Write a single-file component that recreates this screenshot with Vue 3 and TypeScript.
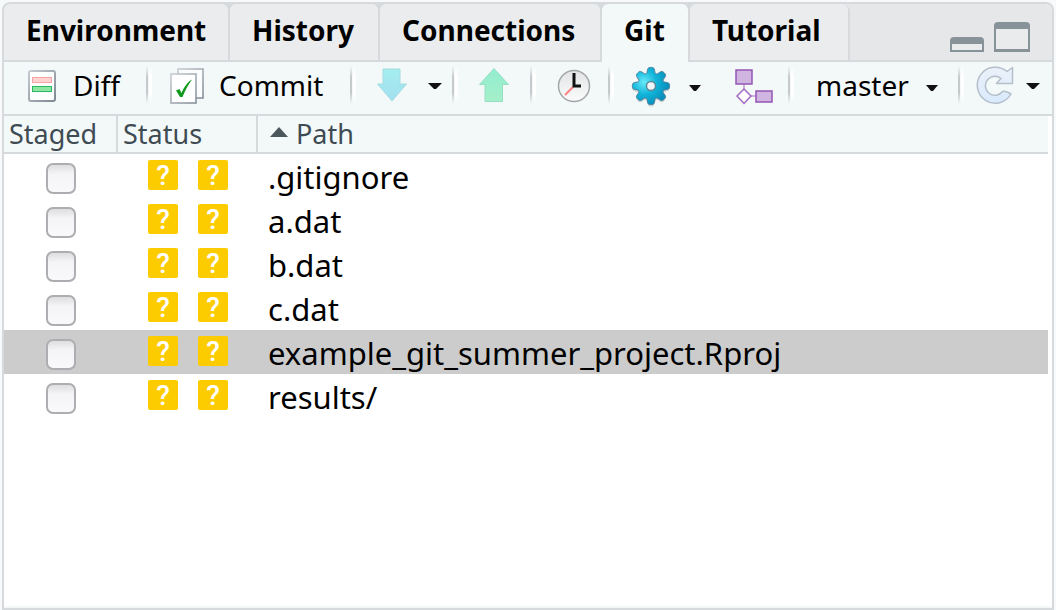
<script setup lang="ts">
import { reactive, ref } from 'vue'

interface FileEntry {
  path: string
  staged: boolean
}

const tabs = ['Environment', 'History', 'Connections', 'Git', 'Tutorial']
const activeTab = ref('Git')
const selected = ref('example_git_summer_project.Rproj')
const files = reactive<FileEntry[]>([
  { path: '.gitignore', staged: false },
  { path: 'a.dat', staged: false },
  { path: 'b.dat', staged: false },
  { path: 'c.dat', staged: false },
  { path: 'example_git_summer_project.Rproj', staged: false },
  { path: 'results/', staged: false },
])

// Outline of an eight-toothed wheel, with rounded tips and valleys.
function gearOutline(cx: number, cy: number): string {
  const points: string[] = []
  const steps = 160
  for (let i = 0; i < steps; i++) {
    const angle = (i / steps) * Math.PI * 2
    const radius = 15.7 + 3 * Math.tanh(1.7 * (Math.cos(8 * angle) + 0.3))
    points.push(`${(cx + radius * Math.sin(angle)).toFixed(2)} ${(cy - radius * Math.cos(angle)).toFixed(2)}`)
  }
  return `M${points.join('L')}Z`
}
const gear = gearOutline(20, 22)
</script>

<template>
  <main class="pane">
    <header class="tabbar">
      <div class="tabs" role="tablist">
        <button
          v-for="tab in tabs"
          :key="tab"
          type="button"
          role="tab"
          class="tab"
          :class="{ active: tab === activeTab }"
          :aria-selected="tab === activeTab"
          @click="activeTab = tab"
        >{{ tab }}</button>
      </div>
      <div class="window-controls">
        <button type="button" aria-label="Minimize">
          <svg width="34" height="15" viewBox="0 0 34 15">
            <path d="M0 15V4Q0 0 4 0H30Q34 0 34 4V15Z" fill="#879398" />
            <rect x="2" y="7" width="30" height="6" fill="#e9ebec" />
          </svg>
        </button>
        <button type="button" aria-label="Maximize">
          <svg width="36" height="30" viewBox="0 0 36 30">
            <path d="M0 30V4Q0 0 4 0H32Q36 0 36 4V30Z" fill="#879398" />
            <rect x="2" y="7" width="32" height="20" fill="#e9ebec" />
          </svg>
        </button>
      </div>
    </header>

    <div class="toolbar" role="toolbar" aria-label="Git">
      <div class="group diff">
        <button type="button" class="tool">
          <svg width="28" height="32" viewBox="0 0 28 32">
            <defs>
              <linearGradient id="page-edge" x1="0" y1="0" x2="1" y2="1">
                <stop offset="0" stop-color="#c3c9cf" />
                <stop offset="1" stop-color="#7f8993" />
              </linearGradient>
            </defs>
            <rect x="1" y="1" width="26" height="30" rx="2" fill="#fdfefe" stroke="url(#page-edge)" stroke-width="2" />
            <rect x="4.500" y="7.500" width="19" height="5" fill="#ffd3d3" stroke="#f5a3a5" />
            <rect x="4.500" y="16.500" width="19" height="5" fill="#8ee6a4" stroke="#27b95c" />
          </svg>
          <span>Diff</span>
        </button>
      </div>
      <div class="group commit">
        <button type="button" class="tool">
          <svg width="34" height="37" viewBox="0 0 34 37">
            <rect x="8" y="1" width="25" height="29" fill="#fbfcfd" stroke="url(#page-edge)" stroke-width="1.5" />
            <rect x="1" y="6" width="25" height="29" fill="#fff" stroke="url(#page-edge)" stroke-width="1.5" />
            <path d="M6 22.500L9.500 21L11.500 25C14 19 17.500 14 22 11.500C18 17 15 23 12.500 29L10 29Z" fill="#119a1b" />
          </svg>
          <span>Commit</span>
        </button>
      </div>
      <div class="group pull">
        <button type="button" class="tool" aria-label="Pull">
          <svg width="32" height="36" viewBox="0 0 32 36">
            <defs>
              <linearGradient id="pull-fill" x1="0" y1="0" x2="0" y2="1">
                <stop offset="0" stop-color="#a4eeee" />
                <stop offset="1" stop-color="#a3dff0" />
              </linearGradient>
            </defs>
            <path d="M7 1H24V16H30.500L16 33L1.500 16H7Z" fill="url(#pull-fill)" stroke="#a5dce2" stroke-linejoin="round" />
          </svg>
        </button>
        <button type="button" class="tool caret" aria-label="Pull options">
          <svg width="14" height="8" viewBox="0 0 14 8"><path d="M0 1H14L8 7H6Z" fill="#111" /></svg>
        </button>
      </div>
      <div class="group push">
        <button type="button" class="tool" aria-label="Push">
          <svg width="32" height="36" viewBox="0 0 32 36">
            <defs>
              <linearGradient id="push-fill" x1="0" y1="0" x2="0" y2="1">
                <stop offset="0" stop-color="#92edd0" />
                <stop offset="1" stop-color="#a5f0c9" />
              </linearGradient>
            </defs>
            <path d="M7 33.500H24.500V16.500H30.500L16 0.500L1.500 16.500H7Z" fill="url(#push-fill)" stroke="#97dfc3" stroke-linejoin="round" />
          </svg>
        </button>
      </div>
      <div class="group history">
        <button type="button" class="tool" aria-label="History">
          <svg width="34" height="34" viewBox="0 0 34 34">
            <defs>
              <linearGradient id="clock-face" x1="0" y1="0" x2="0" y2="1">
                <stop offset="0" stop-color="#e2e4e5" />
                <stop offset="1" stop-color="#fbfbfb" />
              </linearGradient>
            </defs>
            <circle cx="17" cy="17" r="15.500" fill="url(#clock-face)" stroke="#a3a6a8" stroke-width="1.5" />
            <path d="M16 18L8 26" stroke="#ff8080" stroke-width="2" />
            <path d="M17 4V17H24" fill="none" stroke="#111" stroke-width="3" />
          </svg>
        </button>
      </div>
      <div class="group more">
        <button type="button" class="tool" aria-label="More">
          <svg width="40" height="44" viewBox="0 0 40 44">
            <defs>
              <radialGradient id="gear-fill" gradientUnits="userSpaceOnUse" cx="13" cy="18" r="24">
                <stop offset="0" stop-color="#6aeafa" />
                <stop offset="0.500" stop-color="#12b6da" />
                <stop offset="1" stop-color="#0890bd" />
              </radialGradient>
            </defs>
            <path :d="gear" fill="#000" opacity="0.120" transform="translate(0 2)" />
            <path :d="gear" fill="url(#gear-fill)" stroke="#4d7f98" />
            <circle cx="20" cy="22" r="4.500" fill="#f1f7f8" stroke="#5d8795" stroke-width="1.5" />
          </svg>
        </button>
        <button type="button" class="tool caret low" aria-label="More options">
          <svg width="12" height="8" viewBox="0 0 12 8"><path d="M0 1H12L7 7H5Z" fill="#111" /></svg>
        </button>
        <button type="button" class="tool branch" aria-label="New branch">
          <svg width="40" height="38" viewBox="0 0 40 38">
            <path d="M10 15V21M17 28H22" stroke="#c29ad3" stroke-width="1.5" />
            <rect x="2" y="2" width="16" height="14" fill="#cfb5df" stroke="#9455b4" stroke-width="1.5" />
            <rect x="22" y="23" width="16" height="11" fill="#cfb5df" stroke="#9455b4" stroke-width="1.5" />
            <path d="M10 21L17 28L10 35.500L3 28Z" fill="#fff" stroke="#a26bc0" stroke-width="1.5" />
          </svg>
        </button>
      </div>
      <div class="group current">
        <button type="button" class="tool" aria-haspopup="menu">
          <span>master</span>
          <svg class="low" width="12" height="8" viewBox="0 0 12 8"><path d="M0 1H12L7 7H5Z" fill="#111" /></svg>
        </button>
      </div>
      <div class="group refresh">
        <button type="button" class="tool" aria-label="Refresh">
          <svg width="38" height="40" viewBox="0 0 38 40">
            <defs>
              <linearGradient id="refresh-fill" x1="0" y1="0" x2="0" y2="1">
                <stop offset="0" stop-color="#ebf1f9" />
                <stop offset="1" stop-color="#d9eafd" />
              </linearGradient>
            </defs>
            <path
              d="M31 5.500L36.500 1.500V17.500H20.500L25 12.500A9.500 9.500 0 1 0 26.500 25.500Q29.500 24.500 35 28A18 18 0 1 1 31 5.500Z"
              fill="url(#refresh-fill)"
              stroke="#b4bfcb"
              stroke-width="1.5"
              stroke-linejoin="round"
            />
          </svg>
        </button>
        <button type="button" class="tool caret" aria-label="Refresh options">
          <svg width="14" height="8" viewBox="0 0 14 8"><path d="M0 1H14L8 7H6Z" fill="#111" /></svg>
        </button>
      </div>
    </div>

    <table class="files">
      <colgroup>
        <col class="col-staged" />
        <col class="col-status" />
        <col />
      </colgroup>
      <thead>
        <tr>
          <th scope="col">Staged</th>
          <th scope="col">Status</th>
          <th scope="col" class="path-head" aria-sort="ascending">
            <button type="button" class="sort">
              <svg width="18" height="10" viewBox="0 0 18 10"><path d="M0 10L9 0L18 10Z" fill="#4b575d" /></svg>
              Path
            </button>
          </th>
        </tr>
      </thead>
      <tbody>
        <tr
          v-for="(file, index) in files"
          :key="file.path"
          :class="{ selected: file.path === selected }"
          @click="selected = file.path"
        >
          <td><input :id="`staged-${index}`" v-model="file.staged" type="checkbox" /></td>
          <td>
            <div class="badges">
              <span class="badge">?</span>
              <span class="badge">?</span>
            </div>
          </td>
          <td class="path"><label :for="`staged-${index}`">{{ file.path }}</label></td>
        </tr>
      </tbody>
    </table>
  </main>
</template>

<style>
body {
  background: #f7f9fa;
}
</style>

<style scoped>
.pane {
  box-sizing: border-box;
  min-height: calc(100vh - 2px);
  margin: 2px 2px 0;
  border: 2px solid #d6dadc;
  border-radius: 8px 8px 0 0;
  background: #fff;
  box-shadow: inset 0 -2px #f4f7f7;
  overflow: hidden;
  color: #000;
  font-family: "Noto Sans", "Open Sans", sans-serif;
  font-size: 28px;
}

button {
  display: flex;
  align-items: center;
  margin: 0;
  padding: 0;
  border: 0;
  background: none;
  color: inherit;
  font: inherit;
}

svg {
  display: block;
  flex: none;
}

.tabbar {
  display: flex;
  justify-content: space-between;
  height: 56px;
  border-bottom: 2px solid #d6dadc;
  background: #e6e7e9;
}

.tabs {
  display: grid;
  grid-template-columns: 224px 148px 220px 86px 158px;
  align-items: start;
  gap: 2px;
  padding-right: 2px;
  border-radius: 0 8px 0 0;
  background: #d6dadc;
}

.tab {
  justify-content: flex-start;
  height: 56px;
  padding: 0 0 4px 22px;
  border-radius: 6px 6px 0 0;
  background: #ebecee;
  font-weight: 700;
  font-size: 28px;
}

.tab.active {
  height: 58px;
  padding-bottom: 6px;
  background: #f3f8f9;
}

.window-controls {
  display: flex;
  align-items: flex-end;
  gap: 10px;
  padding: 0 22px 8px 0;
}

.toolbar {
  display: grid;
  grid-template-columns: 142px 204px 102px 78px 78px 180px 170px 1fr;
  height: 52px;
  border-bottom: 2px solid #d6dadc;
  background: #f3f8f9;
}

.group {
  display: flex;
  align-items: center;
  padding-bottom: 4px;
  background:
    linear-gradient(#f3f8f9, #c6c9cb 30%, #c6c9cb 70%, #f3f8f9) left 4px / 2px 38px no-repeat,
    linear-gradient(#f3f8f9, #fff 30%, #fff 70%, #f3f8f9) 3px 4px / 3px 38px no-repeat;
}

.tool span {
  margin-bottom: 2px;
}

.diff {
  padding-left: 24px;
  background: none;
}

.diff .tool {
  gap: 17px;
}

.commit {
  padding-left: 24px;
}

.commit .tool {
  gap: 15px;
}

.pull {
  padding-left: 26px;
  gap: 20px;
}

.push {
  padding-left: 26px;
}

.history {
  padding-left: 27px;
}

.more {
  padding-left: 23px;
  gap: 18px;
}

.branch {
  margin: 2px 0 0 15px;
}

.current {
  padding-left: 28px;
}

.current .tool {
  gap: 17px;
}

.low {
  margin-top: 4px;
}

.refresh {
  padding-left: 18px;
  gap: 12px;
}

.files {
  width: calc(100% - 4px);
  table-layout: fixed;
  border-collapse: separate;
  border-spacing: 0;
}

.col-staged {
  width: 114px;
}

.col-status {
  width: 140px;
}

th {
  box-sizing: border-box;
  height: 38px;
  padding: 0 0 0 5px;
  border-right: 2px solid #d6dadc;
  border-bottom: 2px solid #d6dadc;
  background: #f3f8f9;
  color: #3f4b53;
  font-size: 27px;
  font-weight: 400;
  line-height: 36px;
  text-align: left;
}

.path-head {
  padding-left: 12px;
  border-right: 0;
}

.sort {
  gap: 8px;
  line-height: 36px;
}

.sort svg {
  margin-bottom: 4px;
}

td {
  height: 44px;
  padding: 0;
  line-height: 44px;
  vertical-align: top;
}

.selected {
  background: #cccccc;
}

input {
  appearance: none;
  display: block;
  box-sizing: border-box;
  width: 30px;
  height: 31px;
  margin: 9px 0 0 42px;
  border: 2px solid #aeadb1;
  border-radius: 7px;
  background: linear-gradient(#dededf, #f5f5f7 35%, #f9f9fb);
}

input:checked {
  background: #4b575d;
}

.badges {
  display: flex;
  gap: 20px;
  padding: 6px 0 0 30px;
}

.badge {
  width: 30px;
  height: 30px;
  border-radius: 2px;
  background: #fccb00;
  color: #fff;
  font-family: Roboto, sans-serif;
  font-size: 28px;
  font-weight: 500;
  line-height: 32px;
  text-align: center;
}

.path {
  padding-left: 10px;
  font-size: 31px;
  line-height: 46px;
}

.path label {
  display: block;
  height: 44px;
}
</style>
